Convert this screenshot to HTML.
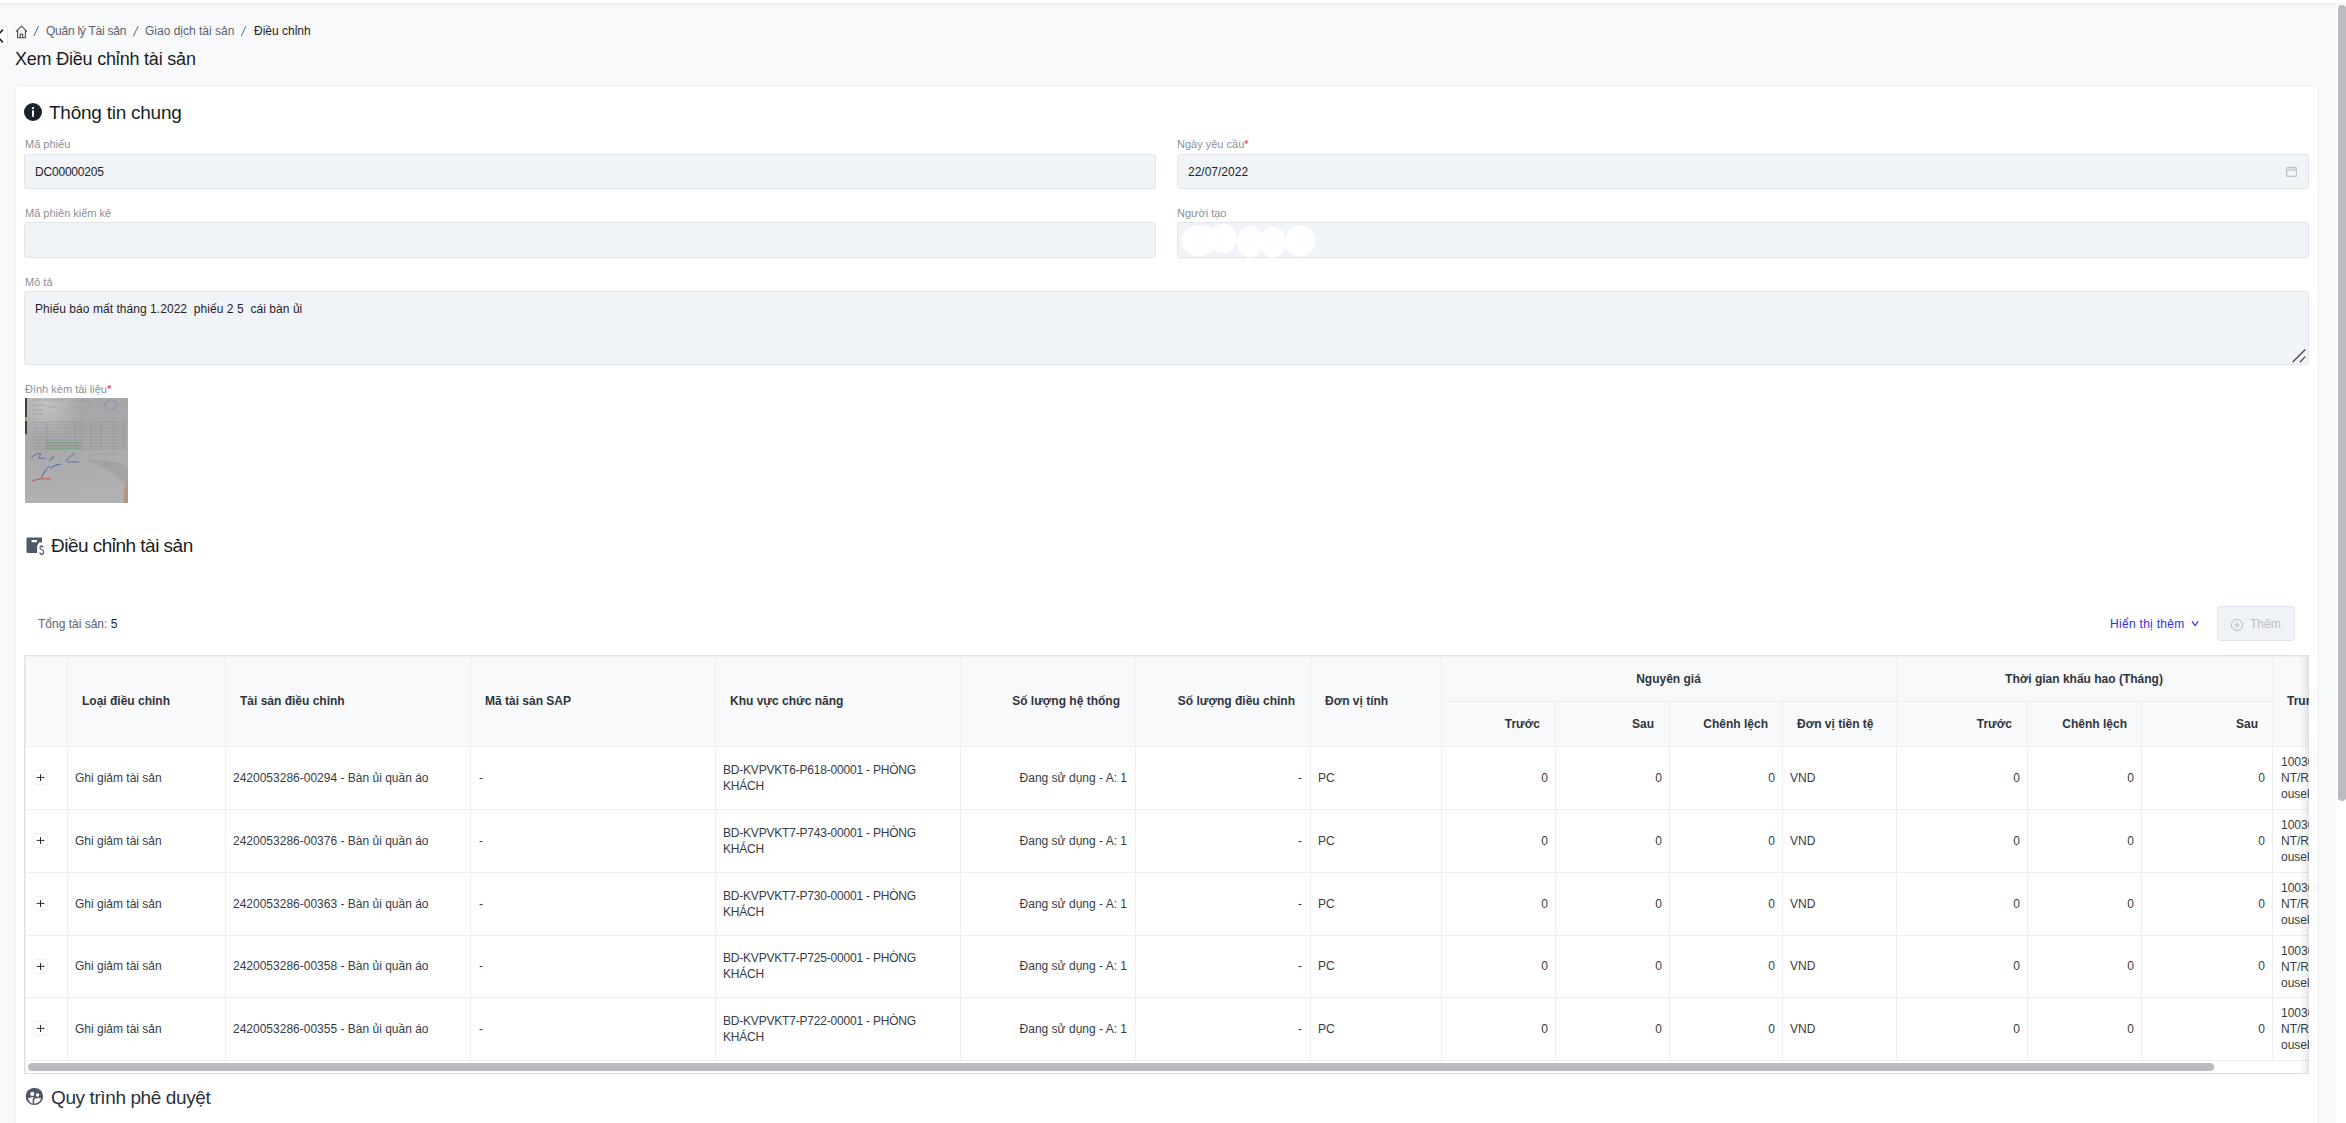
<!DOCTYPE html>
<html><head><meta charset="utf-8">
<style>
*{box-sizing:border-box;margin:0;padding:0}
html,body{width:2346px;height:1123px;overflow:hidden}
body{background:#f8f9fb;font-family:"Liberation Sans",sans-serif;color:#1f2329;position:relative}
.a{position:absolute;white-space:nowrap;line-height:1}
.topbar{position:absolute;left:0;top:0;width:2346px;height:3px;background:#fff;box-shadow:0 1px 4px rgba(0,0,0,.10)}
.tab{position:absolute;left:-8px;top:26px;width:16px;height:21px;background:#fff;border:1px solid #e3e7ee;border-radius:3px;overflow:hidden}
.bc{font-size:12px;color:#5b6270}
.card{position:absolute;left:15px;top:85px;width:2304px;height:1100px;background:#fff;border-radius:4px;border:1px solid #edf0f5}
.h2{font-size:19px;color:#1b1f24;letter-spacing:-0.4px}
.lbl{font-size:11px;color:#8a909a}
.req{color:#f5222d}
.inp{position:absolute;background:#f0f3f8;border:1px solid #e2e5ea;border-radius:3px}
.val{font-size:12px;color:#1f2329}
.vscroll{position:absolute;left:2336px;top:0;width:10px;height:1123px;background:#fff}
.vthumb{position:absolute;left:2338px;top:5px;width:8px;height:796px;background:#bcbbc2;border-radius:4px}
.tbl{position:absolute;left:24px;top:655px;width:2285px;height:419px;border:1px solid #dde1e7;border-right:none;overflow:hidden;background:#fff}
.th{font-size:12px;font-weight:bold;color:#30353d}
.td{font-size:12px;color:#363c44}
.vl{position:absolute;width:1px;background:#eeeff2}
.hl{position:absolute;height:1px;background:#eeeff2}
.ex{position:absolute;width:15px;height:15px;border:1px solid #efefef;border-radius:3px;background:#fff}
</style></head><body>
<div class="vscroll"></div>
<div class="topbar"></div>
<div class="tab"><svg width="16" height="21" viewBox="0 0 16 21" style="position:absolute;left:-1px;top:-1px"><path d="M11 3.6 L4.8 10 L11 16.4" stroke="#252a31" stroke-width="1.7" fill="none"/></svg></div>
<svg class="a" style="left:15px;top:25px" width="13" height="14" viewBox="0 0 13 14"><path d="M1 6.6 L6.5 1.2 L12 6.6 M2.6 5.2 V12.8 H10.4 V5.2 M5.2 12.8 V9.4 Q6.5 8.4 7.8 9.4 V12.8" stroke="#4a505a" stroke-width="1.1" fill="none" stroke-linejoin="round"/></svg>
<svg class="a" style="left:0;top:0" width="260" height="40"><path d="M33.8 36.2 L38.6 26 M133.4 36.2 L138.2 26 M241.2 36.2 L246 26" stroke="#646a74" stroke-width="1"/></svg>
<div class="a bc" style="left:46px;top:25px;letter-spacing:-0.25px">Quản lý Tài sản</div>
<div class="a bc" style="left:145px;top:25px">Giao dịch tài sản</div>
<div class="a bc" style="left:254px;top:25px;color:#1f2329">Điều chỉnh</div>
<div class="a" style="left:15px;top:50px;font-size:18px;letter-spacing:-0.2px;color:#1b1f24">Xem Điều chỉnh tài sản</div>
<div class="card"></div>
<svg class="a" style="left:24px;top:103px" width="18" height="18" viewBox="0 0 18 18"><circle cx="9" cy="9" r="9" fill="#1b2229"/><rect x="8" y="7.4" width="2" height="6.4" fill="#fff"/><circle cx="9" cy="5.1" r="1.15" fill="#fff"/></svg>
<div class="a h2" style="left:49px;top:103px;letter-spacing:-0.25px">Thông tin chung</div>
<div class="a lbl" style="left:25px;top:139px">Mã phiếu</div>
<div class="inp" style="left:24px;top:154px;width:1132px;height:35px"></div>
<div class="a val" style="left:35px;top:166px;letter-spacing:-0.2px">DC00000205</div>
<div class="a lbl" style="left:1177px;top:139px">Ngày yêu cầu<span class="req">*</span></div>
<div class="inp" style="left:1177px;top:154px;width:1132px;height:35px"></div>
<div class="a val" style="left:1188px;top:166px">22/07/2022</div>
<svg class="a" style="left:2286px;top:166px" width="11" height="11" viewBox="0 0 11 11"><rect x="0.7" y="1.7" width="9.6" height="8.6" stroke="#b4b8bf" stroke-width="1" fill="none"/><path d="M0.7 4 H10.3 M3 0.3 V2.5 M8 0.3 V2.5" stroke="#b4b8bf" stroke-width="1"/></svg>
<div class="a lbl" style="left:25px;top:208px">Mã phiên kiểm kê</div>
<div class="inp" style="left:24px;top:222px;width:1132px;height:36px"></div>
<div class="a lbl" style="left:1177px;top:208px">Người tạo</div>
<div class="inp" style="left:1177px;top:222px;width:1132px;height:36px"></div>
<div class="a val" style="left:1188px;top:234px;color:#cfd3da">vinhnt11@vinpearl.com</div>
<svg class="a" style="left:1177px;top:222px" width="160" height="36" viewBox="0 0 160 36"><filter id="sb"><feGaussianBlur stdDeviation="0.6"/></filter><g fill="#fff" fill-opacity="0.96" filter="url(#sb)"><ellipse cx="22" cy="18.5" rx="17.5" ry="15.5"/><ellipse cx="46" cy="16.5" rx="14" ry="14.5"/><ellipse cx="73" cy="20" rx="13.5" ry="15.5"/><ellipse cx="96" cy="20" rx="13" ry="15.5"/><ellipse cx="123" cy="19" rx="15.5" ry="15.5"/></g></svg>
<div class="a lbl" style="left:25px;top:277px">Mô tả</div>
<div class="inp" style="left:24px;top:291px;width:2285px;height:74px"></div>
<div class="a val" style="left:35px;top:303px;letter-spacing:0.05px">Phiếu báo mất tháng 1.2022&nbsp; phiếu 2 5&nbsp; cái bàn ủi</div>
<svg class="a" style="left:2290px;top:347px" width="18" height="18" viewBox="0 0 18 18"><path d="M3.1 14.7 L15 2.8 M10.3 14.7 L15 9.9" stroke="#474747" stroke-width="1.3" stroke-linecap="round"/></svg>
<div class="a lbl" style="left:25px;top:384px">Đính kèm tài liệu<span class="req">*</span></div>
<svg class="a" style="left:25px;top:398px" width="103" height="105" viewBox="0 0 103 105"><defs><linearGradient id="pg" x1="0" y1="0" x2="0.2" y2="1"><stop offset="0" stop-color="#a6a6a8"/><stop offset="0.5" stop-color="#a9a9ab"/><stop offset="1" stop-color="#b1b1b2"/></linearGradient><radialGradient id="hl" cx="0.2" cy="0.05" r="0.35"><stop offset="0" stop-color="#c4c6c6" stop-opacity=".9"/><stop offset="1" stop-color="#c4c6c6" stop-opacity="0"/></radialGradient><filter id="bl"><feGaussianBlur stdDeviation="0.45"/></filter></defs><rect width="103" height="105" fill="url(#pg)"/><rect width="103" height="105" fill="url(#hl)"/><path d="M60 62 Q85 70 103 90 V70 Q90 60 60 62 Z" fill="#9c9c9e" opacity=".5"/><g filter="url(#bl)"><rect x="0" y="0" width="2" height="36" fill="#3c3f44"/><rect x="0" y="19" width="2" height="4" fill="#b09a50"/><g stroke="#828487" stroke-width="0.5" fill="none" opacity=".8"><path d="M8 2 H40 M45 3 H66 M8 7 H20 M8 12 H18 M22 9 H32 M8 16 H18 M46 10 H60"/><path d="M22 24 H101 M8 24.5 H20 M8 27 H101 M8 30 H101 M8 33 H101 M8 36 H101 M8 39 H101 M8 42 H101 M8 45 H101 M8 48 H101 M8 51 H101"/><path d="M22 24 V51 M50 24 V51 M57 24 V51 M66 24 V51 M76 24 V51 M89 24 V51 M99 24 V51"/></g><path d="M21 45 H56 M21 47.5 H56 M21 50 H56" stroke="#4fa85d" stroke-width="0.8"/><ellipse cx="86" cy="7" rx="6" ry="5" stroke="#6a73b8" stroke-width="0.5" fill="none"/><path d="M6 60 Q12 54 16 56 Q10 62 20 60 M24 62 Q30 60 28 58 M40 63 Q46 58 50 55 M42 64 H54" stroke="#4050a8" stroke-width="0.7" fill="none"/><path d="M16 80 Q20 72 24 68 M25 70 Q32 66 36 66" stroke="#3050b0" stroke-width="0.8" fill="none"/><path d="M7 83 Q14 80 26 81" stroke="#c84040" stroke-width="0.8" fill="none"/><path d="M78 66 H96 M70 56 H92" stroke="#8e9196" stroke-width="0.5"/><path d="M99 105 Q97 93 103 80 V105 Z" fill="#b59580"/></g></svg>
<svg class="a" style="left:20px;top:530px" width="30" height="30" viewBox="0 0 30 30"><path d="M6.5 8.6 Q6.5 7.6 7.6 7.6 H20.9 Q22 7.6 22 8.6 V12.4 H19 L17.1 16 V22.9 H7.6 Q6.5 22.9 6.5 21.8 Z" fill="#4e5967"/><rect x="11.6" y="10" width="5.4" height="2.2" fill="#fff"/><path d="M23.3 17.5 Q22.6 16.2 21.6 16.2 Q20 16.2 20 17.8 Q20 19.2 21.7 19.8 Q23.6 20.4 23.6 22.2 Q23.6 24 21.6 24 Q20.3 24 19.6 22.5 M21.6 14.9 V16.2 M21.6 24 V25.6" stroke="#4e5967" stroke-width="1.2" fill="none"/></svg>
<div class="a h2" style="left:51px;top:536px;letter-spacing:-0.52px">Điều chỉnh tài sản</div>
<div class="a" style="left:38px;top:618px;font-size:12px;color:#5b6270">Tổng tài sản: <span style="color:#1f2329">5</span></div>
<div class="a" style="left:2110px;top:618px;font-size:12px;color:#3030e8;letter-spacing:0.3px">Hiển thị thêm</div>
<svg class="a" style="left:2190px;top:619px" width="10" height="9" viewBox="0 0 10 9"><path d="M2 2.3 L5.1 6.5 L8.2 2.3" stroke="#2f2fee" stroke-width="1.25" fill="none"/></svg>
<div class="a" style="left:2217px;top:606px;width:78px;height:35px;background:#eff2f7;border:1px solid #dfe4ec;border-radius:4px"></div>
<svg class="a" style="left:2230px;top:618px" width="14" height="14" viewBox="0 0 14 14"><circle cx="7" cy="7" r="5.6" stroke="#b9bcc2" stroke-width="1" fill="none"/><path d="M7 4.2 V9.8 M4.2 7 H9.8" stroke="#b9bcc2" stroke-width="1.1"/></svg>
<div class="a" style="left:2250px;top:618px;font-size:12px;color:#b9bcc2">Thêm</div>
<div class="tbl">
<div style="position:absolute;left:0;top:0;width:2300px;height:90px;background:#f8f9fb"></div>
<div class="vl" style="left:42px;top:0px;height:404px"></div>
<div class="vl" style="left:200px;top:0px;height:404px"></div>
<div class="vl" style="left:445px;top:0px;height:404px"></div>
<div class="vl" style="left:690px;top:0px;height:404px"></div>
<div class="vl" style="left:935px;top:0px;height:404px"></div>
<div class="vl" style="left:1110px;top:0px;height:404px"></div>
<div class="vl" style="left:1285px;top:0px;height:404px"></div>
<div class="vl" style="left:1416px;top:0px;height:404px"></div>
<div class="vl" style="left:1530px;top:45px;height:359px"></div>
<div class="vl" style="left:1644px;top:45px;height:359px"></div>
<div class="vl" style="left:1757px;top:45px;height:359px"></div>
<div class="vl" style="left:1871px;top:0px;height:404px"></div>
<div class="vl" style="left:2002px;top:45px;height:359px"></div>
<div class="vl" style="left:2116px;top:45px;height:359px"></div>
<div class="vl" style="left:2247px;top:0px;height:404px"></div>
<div class="hl" style="left:1416px;top:45px;width:831px"></div>
<div class="hl" style="left:0;top:90px;width:2300px"></div>
<div class="hl" style="left:0;top:153px;width:2300px"></div>
<div class="hl" style="left:0;top:216px;width:2300px"></div>
<div class="hl" style="left:0;top:279px;width:2300px"></div>
<div class="hl" style="left:0;top:341px;width:2300px"></div>
<div class="hl" style="left:0;top:404px;width:2300px"></div>
<div style="position:absolute;left:0;top:0;width:2300px;height:1px;background:#efefef"></div>
<div style="position:absolute;left:0;top:0;width:1px;height:417px;background:#efefef"></div>
<div class="a th" style="left:57px;top:39px">Loại điều chỉnh</div>
<div class="a th" style="left:215px;top:39px">Tài sản điều chỉnh</div>
<div class="a th" style="left:460px;top:39px">Mã tài sản SAP</div>
<div class="a th" style="left:705px;top:39px">Khu vực chức năng</div>
<div class="a th" style="right:1189px;top:39px">Số lượng hệ thống</div>
<div class="a th" style="right:1014px;top:39px">Số lượng điều chỉnh</div>
<div class="a th" style="left:1300px;top:39px">Đơn vị tính</div>
<div class="a th" style="left:1416px;width:455px;text-align:center;top:17px">Nguyên giá</div>
<div class="a th" style="left:1871px;width:376px;text-align:center;top:17px">Thời gian khấu hao (Tháng)</div>
<div class="a th" style="left:2262px;top:39px">Trung tâm chi phí</div>
<div class="a th" style="right:769px;top:62px">Trước</div>
<div class="a th" style="right:655px;top:62px">Sau</div>
<div class="a th" style="right:541px;top:62px">Chênh lệch</div>
<div class="a th" style="left:1772px;top:62px">Đơn vị tiền tệ</div>
<div class="a th" style="right:297px;top:62px">Trước</div>
<div class="a th" style="right:182px;top:62px">Chênh lệch</div>
<div class="a th" style="right:51px;top:62px">Sau</div>
<div class="ex" style="left:8px;top:114px"></div>
<svg class="a" style="left:8px;top:114px" width="15" height="15" viewBox="0 0 15 15"><path d="M7.5 4.1 V11 M3.7 7.4 H11.5" stroke="#252b33" stroke-width="1"/></svg>
<div class="a td" style="left:50px;top:116px">Ghi giảm tài sản</div>
<div class="a td" style="left:208px;top:116px">2420053286-00294 - Bàn ủi quần áo</div>
<div class="a td" style="left:454px;top:116px">-</div>
<div class="a td" style="left:698px;top:107px;line-height:15.6px;letter-spacing:-0.2px">BD-KVPVKT6-P618-00001 - PHÒNG<br>KHÁCH</div>
<div class="a td" style="right:1182px;top:116px">Đang sử dụng - A: 1</div>
<div class="a td" style="right:1007px;top:116px">-</div>
<div class="a td" style="left:1293px;top:116px">PC</div>
<div class="a td" style="right:761px;top:116px">0</div>
<div class="a td" style="right:647px;top:116px">0</div>
<div class="a td" style="right:534px;top:116px">0</div>
<div class="a td" style="left:1765px;top:116px">VND</div>
<div class="a td" style="right:289px;top:116px">0</div>
<div class="a td" style="right:175px;top:116px">0</div>
<div class="a td" style="right:44px;top:116px">0</div>
<div class="a td" style="left:2256px;top:98px;line-height:16.2px">100300<br>NT/RM<br>ousekeeping</div>
<div class="ex" style="left:8px;top:177px"></div>
<svg class="a" style="left:8px;top:177px" width="15" height="15" viewBox="0 0 15 15"><path d="M7.5 4.1 V11 M3.7 7.4 H11.5" stroke="#252b33" stroke-width="1"/></svg>
<div class="a td" style="left:50px;top:179px">Ghi giảm tài sản</div>
<div class="a td" style="left:208px;top:179px">2420053286-00376 - Bàn ủi quần áo</div>
<div class="a td" style="left:454px;top:179px">-</div>
<div class="a td" style="left:698px;top:170px;line-height:15.6px;letter-spacing:-0.2px">BD-KVPVKT7-P743-00001 - PHÒNG<br>KHÁCH</div>
<div class="a td" style="right:1182px;top:179px">Đang sử dụng - A: 1</div>
<div class="a td" style="right:1007px;top:179px">-</div>
<div class="a td" style="left:1293px;top:179px">PC</div>
<div class="a td" style="right:761px;top:179px">0</div>
<div class="a td" style="right:647px;top:179px">0</div>
<div class="a td" style="right:534px;top:179px">0</div>
<div class="a td" style="left:1765px;top:179px">VND</div>
<div class="a td" style="right:289px;top:179px">0</div>
<div class="a td" style="right:175px;top:179px">0</div>
<div class="a td" style="right:44px;top:179px">0</div>
<div class="a td" style="left:2256px;top:161px;line-height:16.2px">100300<br>NT/RM<br>ousekeeping</div>
<div class="ex" style="left:8px;top:240px"></div>
<svg class="a" style="left:8px;top:240px" width="15" height="15" viewBox="0 0 15 15"><path d="M7.5 4.1 V11 M3.7 7.4 H11.5" stroke="#252b33" stroke-width="1"/></svg>
<div class="a td" style="left:50px;top:242px">Ghi giảm tài sản</div>
<div class="a td" style="left:208px;top:242px">2420053286-00363 - Bàn ủi quần áo</div>
<div class="a td" style="left:454px;top:242px">-</div>
<div class="a td" style="left:698px;top:233px;line-height:15.6px;letter-spacing:-0.2px">BD-KVPVKT7-P730-00001 - PHÒNG<br>KHÁCH</div>
<div class="a td" style="right:1182px;top:242px">Đang sử dụng - A: 1</div>
<div class="a td" style="right:1007px;top:242px">-</div>
<div class="a td" style="left:1293px;top:242px">PC</div>
<div class="a td" style="right:761px;top:242px">0</div>
<div class="a td" style="right:647px;top:242px">0</div>
<div class="a td" style="right:534px;top:242px">0</div>
<div class="a td" style="left:1765px;top:242px">VND</div>
<div class="a td" style="right:289px;top:242px">0</div>
<div class="a td" style="right:175px;top:242px">0</div>
<div class="a td" style="right:44px;top:242px">0</div>
<div class="a td" style="left:2256px;top:224px;line-height:16.2px">100300<br>NT/RM<br>ousekeeping</div>
<div class="ex" style="left:8px;top:303px"></div>
<svg class="a" style="left:8px;top:303px" width="15" height="15" viewBox="0 0 15 15"><path d="M7.5 4.1 V11 M3.7 7.4 H11.5" stroke="#252b33" stroke-width="1"/></svg>
<div class="a td" style="left:50px;top:304px">Ghi giảm tài sản</div>
<div class="a td" style="left:208px;top:304px">2420053286-00358 - Bàn ủi quần áo</div>
<div class="a td" style="left:454px;top:304px">-</div>
<div class="a td" style="left:698px;top:295px;line-height:15.6px;letter-spacing:-0.2px">BD-KVPVKT7-P725-00001 - PHÒNG<br>KHÁCH</div>
<div class="a td" style="right:1182px;top:304px">Đang sử dụng - A: 1</div>
<div class="a td" style="right:1007px;top:304px">-</div>
<div class="a td" style="left:1293px;top:304px">PC</div>
<div class="a td" style="right:761px;top:304px">0</div>
<div class="a td" style="right:647px;top:304px">0</div>
<div class="a td" style="right:534px;top:304px">0</div>
<div class="a td" style="left:1765px;top:304px">VND</div>
<div class="a td" style="right:289px;top:304px">0</div>
<div class="a td" style="right:175px;top:304px">0</div>
<div class="a td" style="right:44px;top:304px">0</div>
<div class="a td" style="left:2256px;top:287px;line-height:16.2px">100300<br>NT/RM<br>ousekeeping</div>
<div class="ex" style="left:8px;top:365px"></div>
<svg class="a" style="left:8px;top:365px" width="15" height="15" viewBox="0 0 15 15"><path d="M7.5 4.1 V11 M3.7 7.4 H11.5" stroke="#252b33" stroke-width="1"/></svg>
<div class="a td" style="left:50px;top:367px">Ghi giảm tài sản</div>
<div class="a td" style="left:208px;top:367px">2420053286-00355 - Bàn ủi quần áo</div>
<div class="a td" style="left:454px;top:367px">-</div>
<div class="a td" style="left:698px;top:358px;line-height:15.6px;letter-spacing:-0.2px">BD-KVPVKT7-P722-00001 - PHÒNG<br>KHÁCH</div>
<div class="a td" style="right:1182px;top:367px">Đang sử dụng - A: 1</div>
<div class="a td" style="right:1007px;top:367px">-</div>
<div class="a td" style="left:1293px;top:367px">PC</div>
<div class="a td" style="right:761px;top:367px">0</div>
<div class="a td" style="right:647px;top:367px">0</div>
<div class="a td" style="right:534px;top:367px">0</div>
<div class="a td" style="left:1765px;top:367px">VND</div>
<div class="a td" style="right:289px;top:367px">0</div>
<div class="a td" style="right:175px;top:367px">0</div>
<div class="a td" style="right:44px;top:367px">0</div>
<div class="a td" style="left:2256px;top:349px;line-height:16.2px">100300<br>NT/RM<br>ousekeeping</div>
<div style="position:absolute;left:2274px;top:0;width:10px;height:419px;background:linear-gradient(90deg,rgba(20,30,45,0),rgba(20,30,45,.05) 60%,rgba(20,30,45,.12))"></div>
<div style="position:absolute;left:3px;top:407px;width:2186px;height:8px;background:#bcbbc2;border-radius:4px"></div>
</div>
<svg class="a" style="left:20px;top:1080px" width="30" height="30" viewBox="0 0 30 30"><circle cx="14.4" cy="16.4" r="8.7" fill="#4e5967"/><circle cx="12.3" cy="13.9" r="2.1" fill="#fff"/><circle cx="17.6" cy="15" r="1.7" fill="#fff"/><path d="M7.9 18.5 Q10.5 17.3 13.8 17 L12.6 19 V23.9 Q9.2 22.4 7.9 18.5 Z" fill="#fff"/><path d="M14.2 19.2 Q16.8 17.4 21.2 18.5 Q19.6 22.8 14.2 23.8 Z" fill="#fff"/></svg>
<div class="a h2" style="left:51px;top:1088px;color:#2a323c">Quy trình phê duyệt</div>
<div class="vthumb"></div>
</body></html>
